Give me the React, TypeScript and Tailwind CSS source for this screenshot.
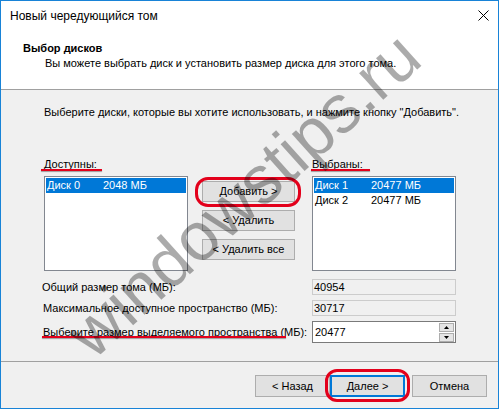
import { FC } from 'react'

const disksLeft = [{ name: 'Диск 0', size: '2048 МБ' }];
const disksRight = [{ name: 'Диск 1', size: '20477 МБ' }, { name: 'Диск 2', size: '20477 МБ' }];

const WinButton: FC<{ children: React.ReactNode; className?: string; primary?: boolean }> = ({ children, className, primary }) => (
    <button
        className={`h-[21px] bg-[#e1e1e1] text-[11px] leading-none text-black flex items-center justify-center ${primary ? 'border-2 border-[#0078d7]' : 'border border-[#adadad]'} ${className ?? ''}`}
    >
        {children}
    </button>
)

const DiskList: FC<{ items: { name: string; size: string }[] }> = ({ items }) => (
    <div className="w-[144px] h-[95px] bg-white border border-[#828790] p-px">
        {items.map((item, i) => (
            <div key={item.name} className={`flex h-[15px] items-center text-[11px] pl-px ${i === 0 ? 'bg-[#0078d7] text-white' : 'text-black'}`}>
                <span className="w-[56px]">{item.name}</span>
                <span>{item.size}</span>
            </div>
        ))}
    </div>
)

const RedLine: FC<{ className: string }> = ({ className }) => (
    <span className={`absolute h-[2px] bg-[#e3001b] shadow-[0_1px_1px_rgba(0,0,0,0.35)] ${className}`} />
)

const App: FC = () => {
    return (
        <div className="w-[499px] h-[409px] relative overflow-hidden border border-[#1883d7] bg-[#f0f0f0] flex flex-col text-black font-['Liberation_Sans',Arial,sans-serif]">
            {/* title bar */}
            <div className="h-[29px] bg-white flex items-center justify-between pl-[9px] pr-[9px]">
                <span className="text-[12px]">Новый чередующийся том</span>
                <svg width="11" height="11" viewBox="0 0 11 11" className="mb-px">
                    <path d="M0.5 0.5 L10.5 10.5 M10.5 0.5 L0.5 10.5" stroke="#000" strokeWidth="1" />
                </svg>
            </div>
            {/* header */}
            <div className="h-[60px] bg-white border-b border-[#a0a0a0] pt-[11px]">
                <p className="pl-[22px] text-[11px] leading-[14px] font-bold">Выбор дисков</p>
                <p className="pl-[44px] mt-px text-[11px] leading-[14px]">Вы можете выбрать диск и установить размер диска для этого тома.</p>
            </div>
            {/* body */}
            <div className="flex-1 pt-[15px]">
                <p className="pl-[43px] text-[11px] leading-[14px]">Выберите диски, которые вы хотите использовать, и нажмите кнопку "Добавить".</p>
                <div className="flex items-start pl-[43px] mt-[38px]">
                    <div className="flex flex-col">
                        <span className="relative text-[11px] leading-[14px]">
                            Доступны:
                            <RedLine className="left-[-3px] top-[12px] w-[61px]" />
                        </span>
                        <div className="mt-[5px]"><DiskList items={disksLeft} /></div>
                    </div>
                    <div className="flex flex-col gap-[8px] pt-[24px] ml-[14px]">
                        <div className="relative">
                            <WinButton className="w-[93px]">Добавить &gt;</WinButton>
                            <span className="absolute left-[-7px] right-[-6px] top-[-4px] bottom-[-5px] rounded-[13px] border-[3px] border-[#e3001b]" />
                        </div>
                        <WinButton className="w-[93px]">&lt; Удалить</WinButton>
                        <WinButton className="w-[93px]">&lt; Удалить все</WinButton>
                    </div>
                    <div className="flex flex-col ml-[17px]">
                        <span className="relative text-[11px] leading-[14px]">
                            Выбраны:
                            <RedLine className="left-[-1px] top-[12px] w-[59px]" />
                        </span>
                        <div className="mt-[5px]"><DiskList items={disksRight} /></div>
                    </div>
                </div>
                <div className="flex flex-col gap-[5px] pl-[41px] mt-[8px]">
                    <div className="flex items-center h-[16px]">
                        <span className="w-[270px] text-[11px]">Общий размер тома (МБ):</span>
                        <div className="w-[144px] h-[16px] border border-[#cccccc] bg-[#f0f0f0] text-[11px] leading-[14px] pl-px">40954</div>
                    </div>
                    <div className="flex items-center h-[16px]">
                        <span className="w-[270px] text-[11px] pl-px">Максимальное доступное пространство (МБ):</span>
                        <div className="w-[144px] h-[16px] border border-[#cccccc] bg-[#f0f0f0] text-[11px] leading-[14px] pl-px">30717</div>
                    </div>
                    <div className="flex items-center h-[22px]">
                        <span className="relative w-[270px] text-[11px] pl-px">
                            Выберите размер выделяемого пространства (МБ):
                            <RedLine className="left-0 top-[12px] w-[244px]" />
                        </span>
                        <div className="w-[144px] h-[22px] border border-[#7a7a7a] bg-white flex items-center justify-between pl-[2px] pr-px">
                            <span className="text-[11px]">20477</span>
                            <div className="flex flex-col gap-px">
                                <div className="w-[15px] h-[9px] border border-[#adadad] bg-[#e5e5e5] flex items-center justify-center">
                                    <svg width="5" height="3" viewBox="0 0 5 3"><path d="M0 3 L2.5 0 L5 3 Z" fill="#000" /></svg>
                                </div>
                                <div className="w-[15px] h-[9px] border border-[#adadad] bg-[#e5e5e5] flex items-center justify-center">
                                    <svg width="5" height="3" viewBox="0 0 5 3"><path d="M0 0 L2.5 3 L5 0 Z" fill="#000" /></svg>
                                </div>
                            </div>
                        </div>
                    </div>
                </div>
            </div>
            {/* footer */}
            <div className="h-[47px] border-t border-[#a0a0a0] flex items-start justify-end pt-[13px] pr-[11px]">
                <WinButton className="w-[75px] h-[22px]">&lt; Назад</WinButton>
                <div className="relative">
                    <WinButton primary className="w-[75px] h-[22px]">Далее &gt;</WinButton>
                    <span className="absolute left-[-5px] right-[-5px] top-[-6px] bottom-[-5px] rounded-[12px] border-[3px] border-[#e3001b]" />
                </div>
                <WinButton className="w-[75px] h-[22px] ml-[7px]">Отмена</WinButton>
            </div>
            {/* watermark */}
            <span className="absolute left-[242px] top-[193px] -translate-x-1/2 -translate-y-1/2 -rotate-[42deg] whitespace-nowrap text-[68px] leading-none text-[rgba(0,0,0,0.33)] pointer-events-none">
                windowstips.ru
            </span>
        </div>
    )
}

export default App;
